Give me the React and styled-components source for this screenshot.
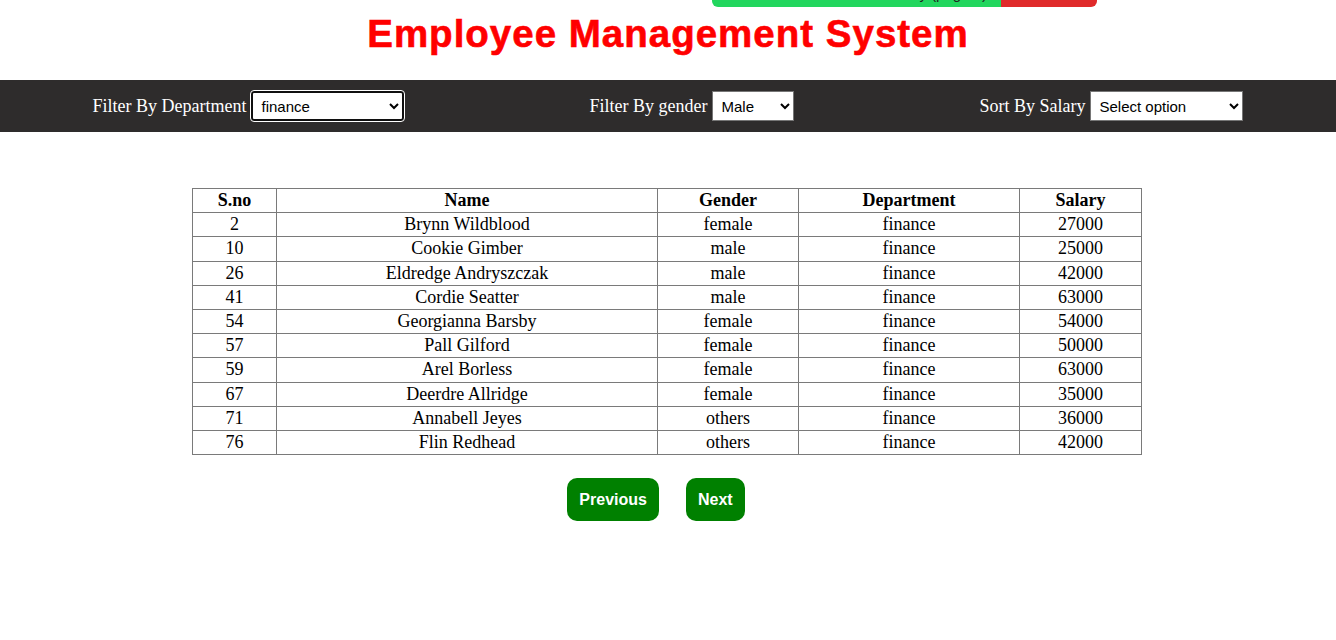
import React from 'react'
import styled, { createGlobalStyle } from 'styled-components'

const employees = [
    { id: 2, name: 'Brynn Wildblood', gender: 'female', dept: 'finance', salary: 27000 },
    { id: 10, name: 'Cookie Gimber', gender: 'male', dept: 'finance', salary: 25000 },
    { id: 26, name: 'Eldredge Andryszczak', gender: 'male', dept: 'finance', salary: 42000 },
    { id: 41, name: 'Cordie Seatter', gender: 'male', dept: 'finance', salary: 63000 },
    { id: 54, name: 'Georgianna Barsby', gender: 'female', dept: 'finance', salary: 54000 },
    { id: 57, name: 'Pall Gilford', gender: 'female', dept: 'finance', salary: 50000 },
    { id: 59, name: 'Arel Borless', gender: 'female', dept: 'finance', salary: 63000 },
    { id: 67, name: 'Deerdre Allridge', gender: 'female', dept: 'finance', salary: 35000 },
    { id: 71, name: 'Annabell Jeyes', gender: 'others', dept: 'finance', salary: 36000 },
    { id: 76, name: 'Flin Redhead', gender: 'others', dept: 'finance', salary: 42000 },
]

function App() {
    return <Page>
        <GlobalStyle />

        {/* toast sliding out of the top edge */}
        <Toast>
            <ToastMessage>Data fetched successfully (page 1)</ToastMessage>
            <ToastClose>Close</ToastClose>
        </Toast>

        <Title>Employee Management System</Title>

        <FilterBar>
            <FilterGroup>
                <label>Filter By Department</label>
                <Select $w={153} $focused defaultValue="finance">
                    <option value="">Select option</option>
                    <option value="finance">finance</option>
                    <option value="hr">hr</option>
                </Select>
            </FilterGroup>
            <FilterGroup>
                <label>Filter By gender</label>
                <Select $w={82} defaultValue="male">
                    <option value="male">Male</option>
                    <option value="female">Female</option>
                </Select>
            </FilterGroup>
            <FilterGroup>
                <label>Sort By Salary</label>
                <Select $w={153} defaultValue="">
                    <option value="">Select option</option>
                    <option value="asc">Ascending</option>
                    <option value="desc">Descending</option>
                </Select>
            </FilterGroup>
        </FilterBar>

        <Table>
            <colgroup>
                <col style={{ width: 84 }} />
                <col style={{ width: 381 }} />
                <col style={{ width: 141 }} />
                <col style={{ width: 221 }} />
                <col style={{ width: 122 }} />
            </colgroup>
            <thead>
                <tr>
                    <th>S.no</th>
                    <th>Name</th>
                    <th>Gender</th>
                    <th>Department</th>
                    <th>Salary</th>
                </tr>
            </thead>
            <tbody>
                {employees.map(e => <tr key={e.id}>
                    <td>{e.id}</td>
                    <td>{e.name}</td>
                    <td>{e.gender}</td>
                    <td>{e.dept}</td>
                    <td>{e.salary}</td>
                </tr>)}
            </tbody>
        </Table>

        <Pager>
            <PageButton>Previous</PageButton>
            <PageButton>Next</PageButton>
        </Pager>
    </Page>
}

export default App

const GlobalStyle = createGlobalStyle`
    body {
        margin: 0;
        background: #fff;
        font-family: "Liberation Serif", "Times New Roman", serif;
    }
`

const Page = styled.div`
    position: relative;
    width: 1336px;
    min-height: 640px;
    overflow: hidden;
`

const Toast = styled.div`
    position: absolute;
    top: -30px;
    left: 712px;
    width: 385px;
    height: 37px;
    display: flex;
    border-radius: 0 0 6px 6px;
    overflow: hidden;
    font-family: "Liberation Sans", Arial, sans-serif;
    font-size: 15px;
    color: #222;
`

const ToastMessage = styled.div`
    flex: 0 0 289px;
    background-color: #22d65e;
    display: flex;
    align-items: flex-end;
    justify-content: flex-end;
    padding: 0 14px 5px 0;
    box-sizing: border-box;
`

const ToastClose = styled.div`
    flex: 1;
    background-color: #e02a2a;
    display: flex;
    align-items: flex-end;
    justify-content: center;
    padding-bottom: 5px;
    color: #fff;
`

const Title = styled.h1`
    margin: 0;
    padding-top: 12px;
    height: 80px;
    box-sizing: border-box;
    text-align: center;
    color: #ff0000;
    font-family: "Liberation Sans", Arial, sans-serif;
    font-weight: 900;
    font-size: 38.5px;
    letter-spacing: 1px;
    line-height: 44px;
    -webkit-text-stroke: 0.6px #ff0000;
`

const FilterBar = styled.div`
    display: flex;
    justify-content: space-around;
    align-items: center;
    height: 52px;
    background-color: #2e2c2c;
    color: #fff;
    font-size: 18px;
`

const FilterGroup = styled.div`
    display: flex;
    align-items: center;
    gap: 5px;
`

const Select = styled.select`
    width: ${p => p.$w}px;
    height: 30px;
    box-sizing: border-box;
    font-family: "Liberation Sans", Arial, sans-serif;
    font-size: 15px;
    color: #000;
    background: #fff;
    border: 1px solid #767676;
    border-radius: 0;
    padding: 0 4px;
    ${p => p.$focused && `
        border: 2px solid #101010;
        border-radius: 3px;
        outline: 1px solid #fff;
    `}
`

const Table = styled.table`
    margin: 56px 0 0 192px;
    width: 949px;
    border-collapse: collapse;
    table-layout: fixed;
    font-size: 18px;
    color: #000;

    th, td {
        border: 1px solid #7a7a7a;
        padding: 1px;
        text-align: center;
        line-height: 21.2px;
    }

    th {
        font-weight: bold;
    }
`

const Pager = styled.div`
    display: flex;
    justify-content: center;
    gap: 27px;
    margin-top: 23px;
    padding-right: 24px;
`

const PageButton = styled.button`
    height: 43px;
    padding: 0 12px;
    border: none;
    border-radius: 10px;
    background-color: #008000;
    color: #fff;
    font-family: "Liberation Sans", Arial, sans-serif;
    font-weight: bold;
    font-size: 16px;
    cursor: pointer;
`
